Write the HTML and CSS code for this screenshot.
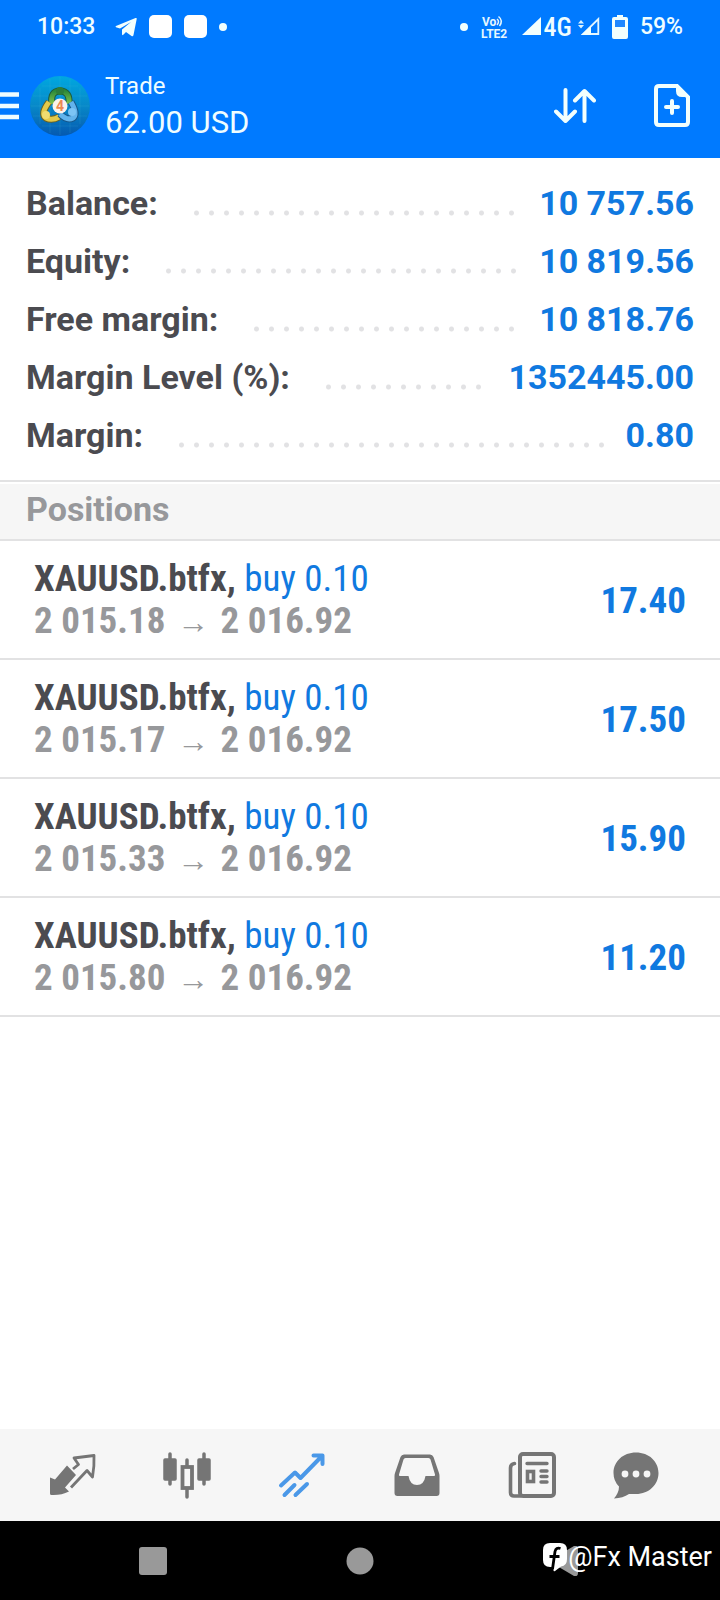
FILE: index.html
```
<!DOCTYPE html>
<html lang="en">
<head>
<meta charset="utf-8">
<meta name="viewport" content="width=device-width, initial-scale=1">
<title>Trade</title>
<link rel="stylesheet" href="styles.css">
</head>
<body>
<div class="app">
  <header class="top">
    <div class="status">
      <div class="status-group">
        <span class="clock">10:33</span>
        <svg class="telegram" width="22" height="20" viewBox="0 0 22 20"><path d="M1 9 20.500 1Q22 .5 21.700 2L18.500 18Q18 20 16.500 19L11 15l-3 3Q7 18.500 7 17v-4.500L16 5 5 11.500 1 10.200Q0 9.600 1 9z" fill="#f2fffd"/></svg>
        <span class="notice"></span>
        <span class="notice"></span>
        <span class="dot"></span>
      </div>
      <div class="status-group status-right">
        <span class="dot"></span>
        <svg class="volte" width="30" height="28" viewBox="0 0 30 28"><text class="volte-text" x="2" y="13">Vo</text><path d="M17 6q3 2.500 0 6M18.500 3.500q5 4 1 9.500" fill="none" stroke="#e4f7ff" stroke-width="1.500"/><text class="volte-text" x="1" y="25">LTE2</text></svg>
        <svg class="signal" width="20" height="19" viewBox="0 0 20 19"><path d="M19 0v18H0z" fill="#f2fffd"/></svg>
        <span class="net">4G</span>
        <svg class="signal-two" width="22" height="19" viewBox="0 0 22 19"><path d="M3 3l3 3.500H0zM0 8h6l-3 3.500z" fill="#d9f2ff" /><path d="M20.300 2v15H5z" fill="none" stroke="#e4f7ff" stroke-width="1.800"/><path d="M13 9v9H3z" fill="#f2fffd"/></svg>
        <svg class="battery" width="16" height="24" viewBox="0 0 16 24"><path d="M5 0h6v2h3q2 0 2 2v18q0 2-2 2H2q-2 0-2-2V4q0-2 2-2h3z" fill="#f2fffd"/><path d="M3 5h10v7H3z" fill="#1f88ff"/></svg>
        <span class="percent">59%</span>
      </div>
    </div>
    <div class="bar">
      <button class="icon-btn menu" aria-label="Menu"><svg width="19" height="28" viewBox="0 0 19 28"><path d="M0 2.500h19M0 14h19M0 25h19" stroke="#effdff" stroke-width="4.500"/></svg></button>
      <svg class="logo" width="60" height="60" viewBox="0 0 60 60">
        <defs>
          <linearGradient id="sky" x1="0" y1="0" x2="0" y2="1"><stop offset="0" stop-color="#00a8e0"/><stop offset=".5" stop-color="#0788c8"/><stop offset="1" stop-color="#0559b0"/></linearGradient>
          <linearGradient id="green" x1="0" y1="0" x2="0" y2="1"><stop offset="0" stop-color="#2b8a3a"/><stop offset="1" stop-color="#83c34c"/></linearGradient>
        </defs>
        <circle cx="30" cy="30" r="30" fill="url(#sky)"/>
        <path d="M10 12v36M20 3v54M30 1v58M40 3v54M50 12v36M12 10h36M3 20h54M1 30h58M3 40h54M12 50h36" stroke="#5cc8e6" stroke-opacity=".14"/>
        <path d="M22 28q-2-13 8-13t9 13" fill="none" stroke="#1c5a3c" stroke-width="7"/>
        <path d="M22 28q-2-13 8-13t9 13" fill="none" stroke="url(#green)" stroke-width="5"/>
        <path d="M19 26q-9 12-3 16 6 3 13-1" fill="none" stroke="#6b6220" stroke-width="7"/>
        <path d="M19 26q-9 12-3 16 6 3 13-1" fill="none" stroke="#e3c94a" stroke-width="5"/>
        <path d="M41 26q7 12 2 16-6 3-13-4" fill="none" stroke="#17578a" stroke-width="7"/>
        <path d="M41 26q7 12 2 16-6 3-13-4" fill="none" stroke="#62b3ec" stroke-width="5"/>
        <circle cx="30" cy="15" r="4" fill="#2d7d3a"/><circle cx="16" cy="39" r="4" fill="#f0dc70"/><circle cx="42" cy="36" r="4" fill="#7cc4f5"/>
        <circle cx="30" cy="30" r="7.500" fill="#fbf3ec"/>
        <text class="logo-num" x="30" y="35" text-anchor="middle">4</text>
      </svg>
      <div class="title">
        <span class="title-name">Trade</span>
        <h1 class="title-sum">62.00 USD</h1>
      </div>
      <button class="icon-btn sort" aria-label="Sort"><svg width="42" height="36" viewBox="0 0 42 36" fill="none" stroke="#f2fffd" stroke-width="4" stroke-linecap="round" stroke-linejoin="round"><path d="M11.500 2v31M2 23.500l9.500 9.500 9.500-9.500M30.500 33V3M21 12.500 30.500 3l9.500 9.500"/></svg></button>
      <button class="icon-btn" aria-label="New order"><svg width="36" height="43" viewBox="0 0 36 43"><path d="M5 2h18l11 11v25q0 3-3 3H5q-3 0-3-3V5q0-3 3-3z" fill="none" stroke="#f2fffd" stroke-width="4"/><path d="M22 1l13 12H28q-6 0-6-6z" fill="#f2fffd"/><path d="M18 17v12M12 23h12" stroke="#f2fffd" stroke-width="4" stroke-linecap="round"/></svg></button>
    </div>
  </header>

  <main class="content">
    <dl class="summary">
      <div class="sum-row"><dt>Balance:</dt><dd class="leader"><span class="dots"></span></dd><dd class="value">10 757.56</dd></div>
      <div class="sum-row"><dt>Equity:</dt><dd class="leader"><span class="dots"></span></dd><dd class="value">10 819.56</dd></div>
      <div class="sum-row"><dt>Free margin:</dt><dd class="leader"><span class="dots"></span></dd><dd class="value">10 818.76</dd></div>
      <div class="sum-row"><dt>Margin Level (%):</dt><dd class="leader"><span class="dots"></span></dd><dd class="value">1352445.00</dd></div>
      <div class="sum-row"><dt>Margin:</dt><dd class="leader"><span class="dots"></span></dd><dd class="value">0.80</dd></div>
    </dl>
    <h2 class="section">Positions</h2>
    <ul class="positions">
      <li class="position"><div><p class="line symbol">XAUUSD.btfx, <span class="side">buy 0.10</span></p><p class="line price">2 015.18 <span class="arrow">→</span> 2 016.92</p></div><span class="profit">17.40</span></li>
      <li class="position"><div><p class="line symbol">XAUUSD.btfx, <span class="side">buy 0.10</span></p><p class="line price">2 015.17 <span class="arrow">→</span> 2 016.92</p></div><span class="profit">17.50</span></li>
      <li class="position"><div><p class="line symbol">XAUUSD.btfx, <span class="side">buy 0.10</span></p><p class="line price">2 015.33 <span class="arrow">→</span> 2 016.92</p></div><span class="profit">15.90</span></li>
      <li class="position"><div><p class="line symbol">XAUUSD.btfx, <span class="side">buy 0.10</span></p><p class="line price">2 015.80 <span class="arrow">→</span> 2 016.92</p></div><span class="profit">11.20</span></li>
    </ul>
  </main>

  <nav class="tabs" aria-label="Sections">
    <button class="icon-btn" aria-label="Quotes"><svg width="48" height="48" viewBox="1 0 48 48"><path d="M20 14.500 29 24 18 36.500l4 4q-8 4-17.500 3.500Q3 44 3 42.500V26.500l5 2z" fill="#757575"/><path d="M26 18l5.500-4.500-4.500-6.500L47 4.500Q47.500 15 45.500 26L40 19.500 24 36.500" fill="none" stroke="#757575" stroke-width="2.800" stroke-linejoin="round"/></svg></button>
    <button class="icon-btn" aria-label="Charts"><svg width="48" height="48" viewBox="0 0 48 48" fill="none" stroke="#757575" stroke-linecap="round"><path d="M7 3v30M41 3v30M24 9v6M24 38v8" stroke-width="3.500"/><rect x="1" y="8" width="12" height="21" rx="1" fill="#757575" stroke-width="1.500"/><rect x="35" y="8" width="12" height="21" rx="1" fill="#757575" stroke-width="1.500"/><rect x="19.500" y="16" width="9.500" height="21" stroke-width="3.800"/></svg></button>
    <button class="icon-btn" aria-label="Trade"><svg width="48" height="48" viewBox="1 0 48 48" fill="none" stroke="#4a98e8" stroke-width="4" stroke-linecap="round" stroke-linejoin="round"><path d="M4 34.500 18 21.500l5.500 5.500L44 6M36.500 4.500H45.500V13M7.500 44l10-10M18.500 44l11.500-11"/></svg></button>
    <button class="icon-btn" aria-label="History"><svg width="48" height="48" viewBox="0 0 48 48"><path fill-rule="evenodd" d="M11 3.500h26q2.500 0 3.500 2.500l5.500 16q.500 1.500.5 3v17q0 3-3 3h-39q-3 0-3-3V25q0-1.500.5-3L7.500 6Q8.500 3.500 11 3.500zM12.500 7q-1.500 0-2 1.500L6 23.500q-.3 1.500 1 1.500h8.500q1.500 9 8.500 9t8.500-9H41q1.300 0 1-1.500L37.500 8.500Q37 7 35.500 7z" fill="#757575"/></svg></button>
    <button class="icon-btn" aria-label="News"><svg width="48" height="48" viewBox="0 0 48 48" fill="none" stroke="#757575"><rect x="12" y="3" width="34" height="42" rx="3" stroke-width="4"/><path d="M13 45H6q-3.500 0-3.500-3.500V17q0-4 4-4.500" stroke-width="3.600" stroke-linecap="round"/><path d="M19 12.500h20M33 20h6M33 25.500h6M33 31h6" stroke-width="3.400" stroke-linecap="round"/><rect x="19.500" y="20.500" width="6" height="10" stroke-width="3.600"/></svg></button>
    <button class="icon-btn" aria-label="Messages"><svg width="48" height="48" viewBox="0 0 48 48"><path d="M24 1.500c13 0 22.500 9 22.500 20.500S37 43 24 43q-4-.2-7 0-6 4-15 4.500 5-6 5-12Q1.500 30 1.500 22C1.500 10.500 11 1.500 24 1.500z" fill="#757575"/><g fill="#f6f6f6"><circle cx="13" cy="23" r="3.400"/><circle cx="24" cy="23" r="3.400"/><circle cx="35" cy="23" r="3.400"/></g></svg></button>
  </nav>

  <div class="system">
    <button class="icon-btn" aria-label="Recents"><svg width="30" height="30" viewBox="0 0 30 30"><rect x="1" y="1" width="28" height="28" rx="3" fill="#999"/></svg></button>
    <button class="icon-btn" aria-label="Home"><svg width="30" height="30" viewBox="0 0 30 30"><circle cx="15" cy="15" r="13.500" fill="#999"/></svg></button>
    <button class="icon-btn" aria-label="Back"><svg width="30" height="30" viewBox="0 0 30 30"><path d="M0 13 22 0q4-1 4 3v24q0 4-4 3L0 17q-3-2 0-4z" fill="#999"/></svg></button>
    <div class="credit">
      <svg width="26" height="30" viewBox="0 0 26 30"><path d="M8 1h10q7 0 7 7v9q0 7-6 7.500L13 29q-1.500 1-1.500-1V25H8q-7 0-7-7V8q0-7 7-7z" fill="#fff"/><path d="M18.500 6.500q-4.500-1.500-5.500 3L10.500 27M7.500 14.500h10" fill="none" stroke="#000" stroke-width="2.800"/></svg>
      <span class="credit-name">@Fx Master</span>
    </div>
  </div>
</div>
</body>
</html>
```
FILE: styles.css
```
* { box-sizing: border-box; }

body {
  margin: 0;
  background: #fff;
  font-family: Roboto, "Liberation Sans", sans-serif;
}

p, h1, h2, ul, dl, dd { margin: 0; padding: 0; }
svg { display: block; flex: none; }

.app {
  display: flex;
  flex-direction: column;
  min-height: 100vh;
}

.icon-btn {
  display: flex;
  align-items: center;
  justify-content: center;
  padding: 0;
  border: 0;
  background: none;
  cursor: pointer;
}

/* Header */
.top {
  background: #007aff;
  color: #effdff;
}

.status {
  display: flex;
  justify-content: space-between;
  align-items: center;
  height: 53px;
  padding: 0 37px;
  font-size: 23px;
  font-weight: 500;
}

.status-group {
  display: flex;
  align-items: center;
  gap: 12px;
}

.telegram { margin-left: 8px; }

.notice {
  width: 23px;
  height: 23px;
  border-radius: 5px;
  background: #fff;
}

.dot {
  width: 8px;
  height: 8px;
  border-radius: 50%;
  background: #f2fffd;
}

.volte-text {
  font: 700 12px Roboto, sans-serif;
  fill: #e4f7ff;
}

.net {
  margin: 0 -6px 0 -10px;
  font-family: "Roboto Condensed", Roboto, sans-serif;
  font-size: 26px;
}

.bar {
  display: flex;
  align-items: center;
  height: 105px;
  padding-right: 30px;
}

.logo { margin-left: 11px; }

.logo-num {
  font: 700 14px Roboto, sans-serif;
  fill: #ee8a52;
}

.title {
  flex: 1;
  margin-left: 15px;
}

.title-name {
  display: block;
  font-size: 24px;
  line-height: 34px;
}

.title-sum {
  font-size: 31px;
  font-weight: 400;
  line-height: 40px;
}

.sort { margin-right: 58px; }

/* Account summary */
.content { flex: 1; }

.summary {
  padding: 16px 26px;
  border-bottom: 2px solid #e2e2e3;
  font-size: 34px;
  font-weight: 700;
  line-height: 58px;
}

.sum-row {
  display: flex;
  align-items: center;
}

.sum-row dt { color: #4b4b50; }

.leader {
  flex: 1;
  margin: 20px 15px 0 31px;
}

.dots {
  display: block;
  width: 100%;
  width: round(down, 100%, 15px);
  height: 6px;
  background: radial-gradient(circle, #e2e2e4 2px, transparent 3px) 0 0 / 15px 6px repeat-x;
}

.value { color: #1079e0; }

/* Positions */
.section {
  margin-top: 2px;
  padding: 0 26px 5px;
  border-bottom: 2px solid #e2e2e3;
  background: #f6f6f6;
  color: #97989b;
  font-size: 34px;
  font-weight: 700;
  line-height: 50px;
}

.positions { list-style: none; }

.position {
  display: flex;
  align-items: center;
  justify-content: space-between;
  padding: 17px 34px 16px;
  border-bottom: 2px solid #e2e2e3;
  font-family: "Roboto Condensed", Roboto, sans-serif;
  font-size: 37px;
  font-weight: 700;
}

.line {
  line-height: 42px;
  white-space: nowrap;
}

.symbol { color: #4b4b50; }

.side {
  color: #1079e0;
  font-weight: 400;
}

.price { color: #97989b; }

.arrow {
  margin: 0 3px;
  font-family: "Liberation Sans", sans-serif;
  font-size: 32px;
  font-weight: 700;
  line-height: 32px;
}

.profit { color: #1079e0; }

/* Bottom navigation */
.tabs {
  display: grid;
  grid-template-columns: repeat(5, 115fr) 92fr;
  height: 92px;
  padding: 0 38px 0 14px;
  background: #f6f6f6;
}

.system {
  position: relative;
  display: grid;
  grid-template-columns: repeat(3, 1fr);
  height: 79px;
  padding: 0 50px;
  background: #000;
}

.credit {
  position: absolute;
  right: 8px;
  bottom: 25px;
  display: flex;
  align-items: center;
  color: #fff;
}

.credit-name {
  font-size: 27px;
  line-height: 36px;
}
```
